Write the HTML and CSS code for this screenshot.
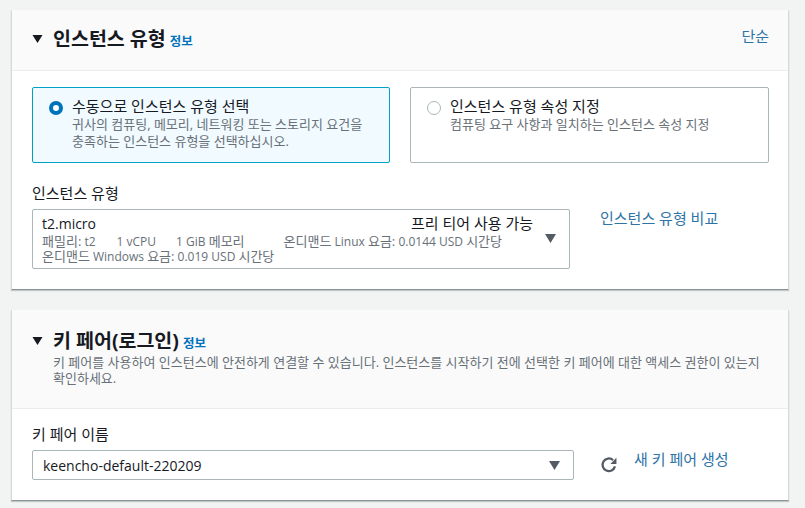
FILE: index.html
```html
<!DOCTYPE html>
<html lang="ko">
<head>
<meta charset="utf-8">
<title>인스턴스 유형</title>
<link rel="stylesheet" href="styles.css">
</head>
<body>
<section class="card card-instance">
  <header class="card-head head-instance">
    <div class="title-row">
      <svg class="caret" viewBox="0 0 10 8" width="11" height="8"><path d="M0 0H10L5 8Z"/></svg>
      <h2>인스턴스 유형</h2>
      <a class="info">정보</a>
      <a class="simple">단순</a>
    </div>
  </header>
  <div class="card-body body-instance">
    <div class="radios">
      <div class="tile tile-on">
        <span class="radio radio-on"></span>
        <div>
          <div class="tile-title">수동으로 인스턴스 유형 선택</div>
          <div class="tile-desc">귀사의 컴퓨팅, 메모리, 네트워킹 또는 스토리지 요건을<br>충족하는 인스턴스 유형을 선택하십시오.</div>
        </div>
      </div>
      <div class="tile">
        <span class="radio"></span>
        <div>
          <div class="tile-title">인스턴스 유형 속성 지정</div>
          <div class="tile-desc">컴퓨팅 요구 사항과 일치하는 인스턴스 속성 지정</div>
        </div>
      </div>
    </div>
    <div class="field-label label-type">인스턴스 유형</div>
    <div class="select-row">
      <div class="select select-type">
        <div class="opt-main"><span>t2.micro</span><span class="free">프리 티어 사용 가능</span></div>
        <div class="opt-meta meta-first"><span class="m1"><span class="ko">패밀리:</span> t2</span><span class="m2">1 vCPU</span><span class="m3">1 GiB <span class="ko">메모리</span></span><span><span class="ko">온디맨드</span> Linux <span class="ko">요금:</span> 0.0144 USD <span class="ko">시간당</span></span></div>
        <div class="opt-meta"><span class="ko">온디맨드</span> Windows <span class="ko">요금:</span> 0.019 USD <span class="ko">시간당</span></div>
        <svg class="arrow arrow-type" viewBox="0 0 10 8" width="11" height="9"><path d="M0 0H10L5 8Z"/></svg>
      </div>
      <a class="link link-compare">인스턴스 유형 비교</a>
    </div>
  </div>
</section>
<section class="card card-key">
  <header class="card-head head-key">
    <div class="title-row">
      <svg class="caret" viewBox="0 0 10 8" width="11" height="8"><path d="M0 0H10L5 8Z"/></svg>
      <h2>키 페어(로그인)</h2>
      <a class="info">정보</a>
    </div>
    <p class="key-desc">키 페어를 사용하여 인스턴스에 안전하게 연결할 수 있습니다. 인스턴스를 시작하기 전에 선택한 키 페어에 대한 액세스 권한이 있는지<br>확인하세요.</p>
  </header>
  <div class="card-body body-key">
    <div class="field-label label-key">키 페어 이름</div>
    <div class="select-row">
      <div class="select select-key">
        <span>keencho-default-220209</span>
        <svg class="arrow" viewBox="0 0 10 8" width="11" height="9"><path d="M0 0H10L5 8Z"/></svg>
      </div>
      <svg class="refresh" viewBox="0 0 16 16" width="18" height="18"><path d="M13.3 9.2A5.6 5.6 0 1 1 11.6 3.6" fill="none" stroke="#545b64" stroke-width="2"/><path d="M14.6 1.6V7H9.2Z" fill="#545b64"/></svg>
      <a class="link link-new">새 키 페어 생성</a>
    </div>
  </div>
</section>
</body>
</html>
```

FILE: styles.css
```css
* { box-sizing: border-box; }
html, body { margin: 0; height: 100%; }
body {
  background: #f2f3f3;
  padding: 10px 16px 0 11px;
  height: 508px;
  overflow: hidden;
  font-family: "Open Sans", "Noto Sans CJK KR", sans-serif;
  font-size: 13px;
  color: #16191f;
}
.card {
  background: #fff;
  width: 778px;
  border-right: 1px solid #d5dbdb;
  border-left: 1px solid #d5dbdb;
  border-bottom: 1px solid #879596;
  box-shadow: 0 1px 1px rgba(0, 28, 36, .2);
}
.card-instance { height: 280px; }
.card-key { height: 191px; margin-top: 20px; }
.card-head {
  background: #fafafa;
  border-bottom: 1px solid #eaeded;
  padding: 0 20px;
}
.head-instance { height: 61px; padding-top: 16px; }
.head-key { height: 99px; padding-top: 18px; }
.title-row { display: flex; align-items: center; height: 26px; }
.caret { fill: #16191f; margin-right: 10px; flex: none; }
h2 {
  margin: 0;
  font-size: 19.5px;
  line-height: 26px;
  font-weight: 700;
}
.info { margin-left: 4px; font-size: 12.5px; font-weight: 700; color: #0073bb; padding-top: 3px; }
.simple { margin-left: auto; margin-right: -1px; color: #2e73a6; font-size: 15px; position: relative; top: -4px; }
.key-desc {
  margin: 0 0 0 21px;
  font-size: 13px;
  line-height: 16px;
  color: #687078;
  white-space: nowrap;
}
.body-instance { padding: 16px 20px 0; }
.radios { display: grid; grid-template-columns: 358px 359px; gap: 20px; }
.tile {
  height: 76px;
  border: 1px solid #aab7b8;
  border-radius: 2px;
  padding: 8px 16px;
  display: flex;
  gap: 9px;
}
.tile-on { background: #f1faff; border-color: #00a1c9; }
.radio {
  width: 14px;
  height: 14px;
  border-radius: 50%;
  border: 1px solid #aab7b8;
  background: #fff;
  margin-top: 5px;
  flex: none;
}
.radio-on { border: 4px solid #0073bb; }
.tile-title { font-size: 15px; line-height: 20px; }
.tile-desc { font-size: 13px; line-height: 17px; color: #687078; white-space: nowrap; }
.field-label { font-size: 15px; line-height: 20px; }
.label-type { margin-top: 20px; }
.select-row { display: flex; align-items: flex-start; }
.select {
  position: relative;
  border: 1px solid #aab7b8;
  border-radius: 2px;
  background: #fff;
}
.select-type { width: 538px; height: 60px; margin-top: 6px; padding: 5px 9px; }
.opt-main { display: flex; font-size: 14px; line-height: 17px; }
.free { margin-left: auto; margin-right: 27px; font-size: 15px; }
.opt-meta { font-size: 12px; line-height: 15px; color: #687078; white-space: nowrap; }
.meta-first { margin-top: 2px; }
.ko { font-size: 13px; }
.m1 { margin-right: 21px; }
.m2 { margin-right: 20px; }
.m3 { margin-right: 39px; }
.arrow { fill: #545b64; flex: none; }
.arrow-type { position: absolute; right: 13px; top: 24px; }
.link { color: #2e73a6; font-size: 15px; line-height: 20px; }
.link-compare { margin-left: 30px; margin-top: 5px; }
.body-key { padding: 15px 20px 0; }
.select-key {
  width: 542px;
  height: 30px;
  margin-top: 6px;
  padding: 0 10px;
  display: flex;
  align-items: center;
  justify-content: space-between;
  font-size: 14px;
}
.select-key .arrow { margin-right: 3px; }
.refresh { margin: 12px 0 0 26px; flex: none; }
.link-new { margin: 0 0 0 16px; padding-top: 5px; }
```
